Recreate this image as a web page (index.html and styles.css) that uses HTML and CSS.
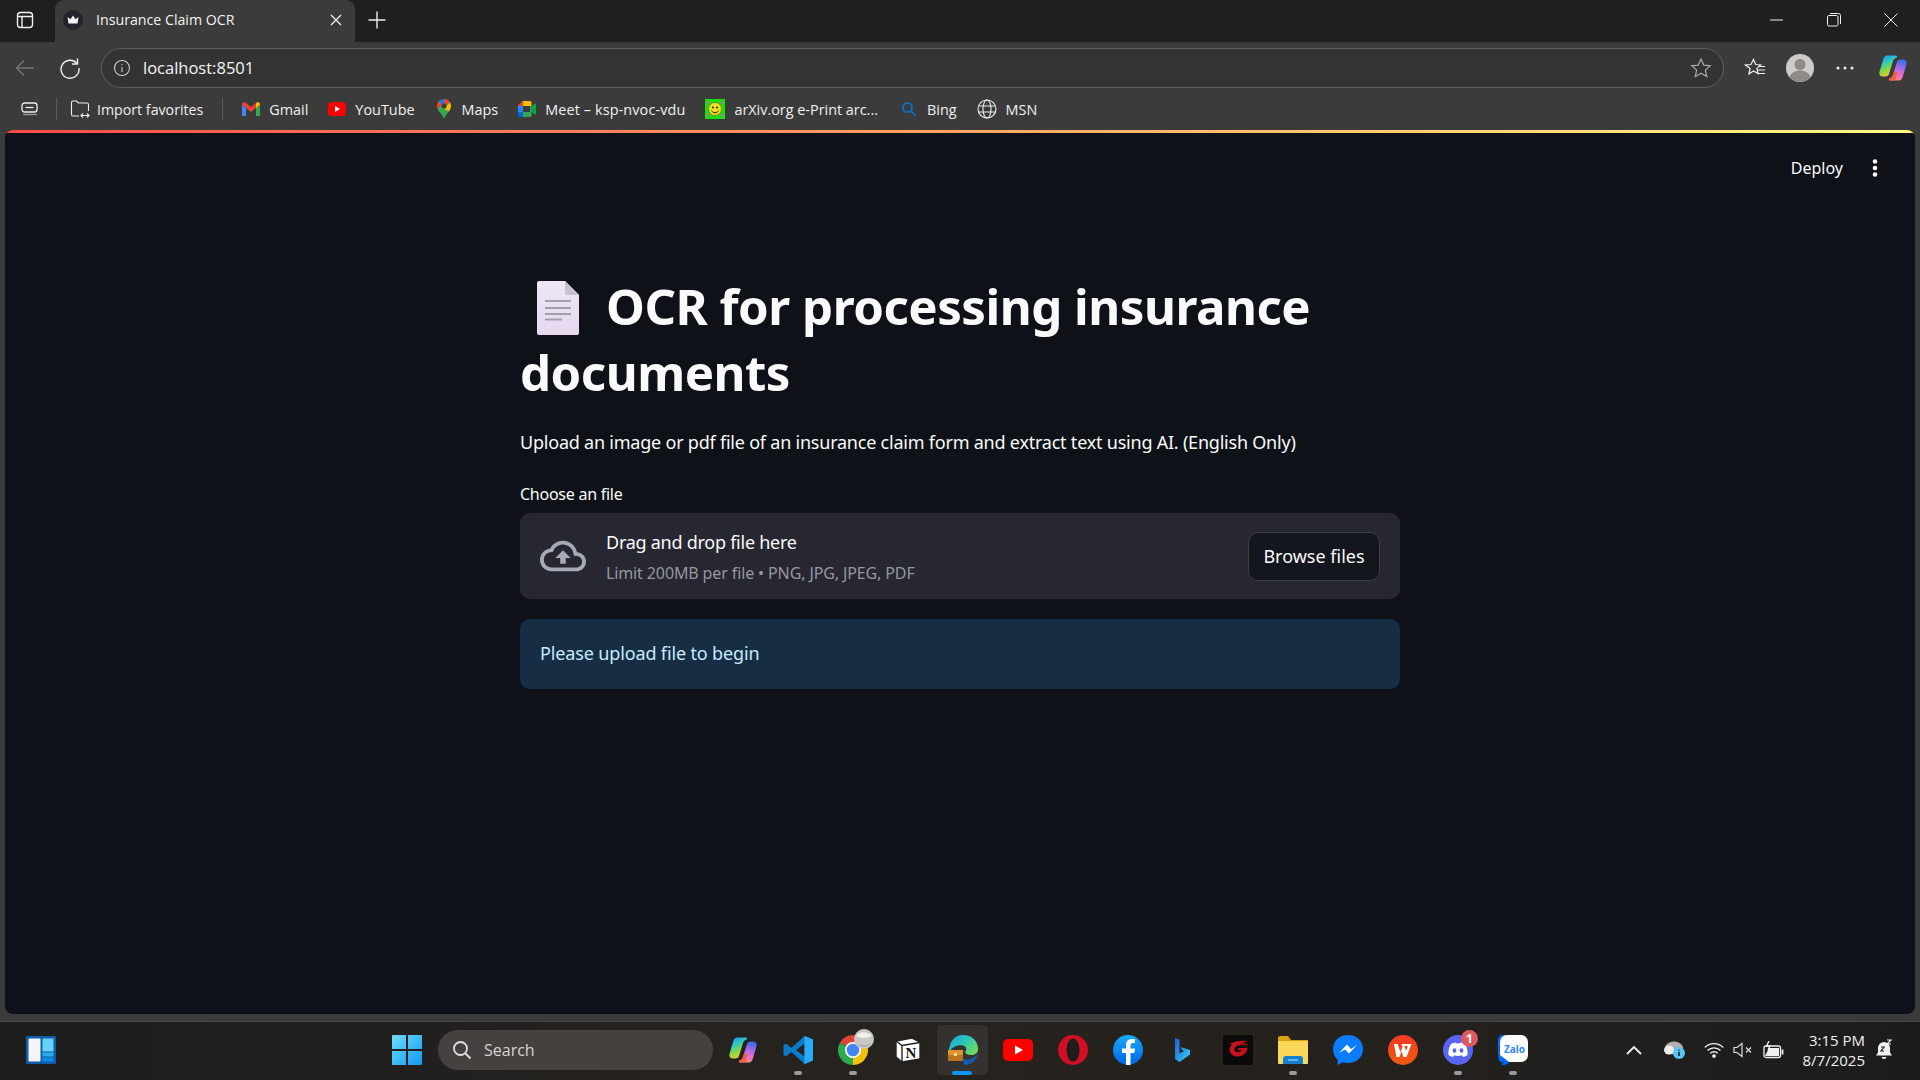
FILE: index.html
```html
<!DOCTYPE html>
<html lang="en">
<head>
<meta charset="utf-8">
<title>Insurance Claim OCR</title>
<link rel="stylesheet" href="styles.css">
</head>
<body>
<div class="screen">
  <div class="titlebar">
    <svg class="side-toggle" width="20" height="20" viewBox="0 0 20 20" fill="none" stroke="#f0f0f0" stroke-width="1.400"><rect x="2.500" y="2.500" width="15" height="15" rx="3"/><path d="M2.500 6.500h15M7 6.500v11"/></svg>
    <div class="tab">
      <svg width="20" height="20" viewBox="0 0 20 20"><circle cx="10" cy="10" r="10" fill="#23242f"/><path d="M4.500 7l3 2.200L10 5.500l2.500 3.700 3-2.200-1 6.500h-9z" fill="#f4f4f4"/></svg>
      <span class="tab-title">Insurance Claim OCR</span>
      <svg class="tab-close" width="14" height="14" viewBox="0 0 14 14" stroke="#eee" stroke-width="1.300"><path d="M2 2l10 10M12 2L2 12"/></svg>
    </div>
    <svg class="new-tab" width="20" height="20" viewBox="0 0 20 20" stroke="#eee" stroke-width="1.400"><path d="M10 1.500v17M1.500 10h17"/></svg>
    <div class="win-controls">
      <svg width="14" height="14" viewBox="0 0 14 14" stroke="#eee" stroke-width="1"><path d="M0 7h13"/></svg>
      <svg width="14" height="14" viewBox="0 0 14 14" fill="none" stroke="#eee" stroke-width="1"><rect x=".5" y="2.500" width="10.500" height="10.500" rx="1.500"/><path d="M3 .5h8.500a2 2 0 0 1 2 2V11"/></svg>
      <svg width="14" height="14" viewBox="0 0 14 14" stroke="#eee" stroke-width="1"><path d="M.5.5l13 13M13.500.5l-13 13"/></svg>
    </div>
  </div>

  <div class="toolbar">
    <svg class="back" width="20" height="20" viewBox="0 0 20 20" fill="none" stroke="#777" stroke-width="1.300"><path d="M19 10H1.500M9 2.500L1.500 10 9 17.500"/></svg>
    <svg class="reload" width="22" height="22" viewBox="0 0 22 22" fill="none" stroke="#eee" stroke-width="1.400"><path d="M18 6.500A9 9 0 1 0 20 11"/><path d="M18.500 1.500v5.500H13"/></svg>
    <div class="address">
      <svg width="18" height="18" viewBox="0 0 18 18" fill="none" stroke="#ccc" stroke-width="1.100"><circle cx="9" cy="9" r="7.500"/><path d="M9 8v5M9 5v1.300"/></svg>
      <span class="url">localhost:8501</span>
      <svg class="star" width="22" height="22" viewBox="0 0 22 22" fill="none" stroke="#aaa" stroke-width="1.200"><path d="M11 2l2.700 6.100 6.500.6-4.900 4.400 1.500 6.500L11 16.200l-5.800 3.400 1.500-6.500-4.900-4.400 6.500-.6z"/></svg>
    </div>
    <svg class="fav" width="22" height="22" viewBox="0 0 22 22" fill="none" stroke="#f0f0f0" stroke-width="1.200"><path d="M9.500 2.500l2.200 5 5 .5-3.800 3.400 1.200 5.100L9.500 14l-4.600 3 1.200-5.600L1.500 8l5.500-.5z"/><path d="M15 9.500h6M14 13h7M14 16.500h7"/></svg>
    <svg class="profile" width="28" height="28" viewBox="0 0 28 28"><circle cx="14" cy="14" r="14" fill="#cdcbc7"/><circle cx="14" cy="10.500" r="5.500" fill="#8e8b87"/><path d="M3.500 23c2-4.500 6-6.500 10.500-6.500S22.500 18.500 24.500 23A14 14 0 0 1 3.500 23z" fill="#8e8b87"/></svg>
    <svg class="dots" width="18" height="4" viewBox="0 0 18 4" fill="#eee"><circle cx="2" cy="2" r="1.500"/><circle cx="9" cy="2" r="1.500"/><circle cx="16" cy="2" r="1.500"/></svg>
    <svg class="copilot" width="28" height="26" viewBox="0 0 28 26"><defs><linearGradient id="cpa" x1="0.100" y1="0" x2="0.500" y2="1"><stop offset="0" stop-color="#1b8ff2"/><stop offset=".35" stop-color="#2bc7c9"/><stop offset=".65" stop-color="#7fd84a"/><stop offset="1" stop-color="#f5c52e"/></linearGradient><linearGradient id="cpb" x1="0.700" y1="0" x2="0.500" y2="1"><stop offset="0" stop-color="#2c6ee8"/><stop offset=".4" stop-color="#a668e8"/><stop offset=".8" stop-color="#ef74c0"/><stop offset="1" stop-color="#f78a7a"/></linearGradient></defs><path d="M8 0.500h8.500c1.500 0 2 1 1.200 2-2 .5-3 1.600-3.700 3.500L10 19c-.6 1.800-2 2.500-3.500 2.500H4C1 21.500-.3 19.200.6 16.500L4 5c.8-2.800 2-4.500 4-4.500z" fill="url(#cpa)"/><path d="M20 25.500h-8.500c-1.500 0-2-1-1.200-2 2-.5 3-1.600 3.700-3.500l4-13c.6-1.800 2-2.500 3.500-2.500H24c3 0 4.300 2.300 3.400 5L24 21c-.8 2.800-2 4.500-4 4.500z" fill="url(#cpb)"/><path d="M10.500 23.800c1.800-.7 2.700-1.800 3.300-3.500l1-3.300h3.500l-1 6c-.5 1.500-2 2.500-3.500 2.500h-2.300c-1.200 0-1.600-.9-1-1.700z" fill="#f2603f"/></svg>
  </div>

  <div class="bookmarks">
    <svg class="bm-tabs" width="18" height="14" viewBox="0 0 18 14" fill="none" stroke="#eee" stroke-width="1.300"><rect x="1" y="1" width="15" height="9" rx="2.500"/><path d="M4.500 5.500h8"/><path d="M2 12.500h14" stroke="#999"/></svg>
    <span class="bm-sep"></span>
    <span class="bm bm-import">
      <svg width="20" height="20" viewBox="0 0 20 20" fill="none" stroke="#eee" stroke-width="1.100"><path d="M9 17H3a1.500 1.500 0 0 1-1.500-1.500V3.500A1.500 1.500 0 0 1 3 2h3.500l2 2H17a1.500 1.500 0 0 1 1.500 1.500V12"/><path d="M11 16.500h8M13 14.500l-2 2 2 2M17 14.500l2 2-2 2"/></svg>
      <span>Import favorites</span>
    </span>
    <span class="bm-sep bm-sep-wide"></span>
    <div class="bm-list">
      <span class="bm"><svg width="18" height="14" viewBox="0 0 18 14"><path d="M0 2.500V14h4V6z" fill="#4285f4"/><path d="M18 2.500V14h-4V6z" fill="#34a853"/><path d="M0 2.500C0 .500 2.500-.5 4 1l5 4 5-4c1.500-1.500 4-.5 4 1.500L14 6 9 10 4 6z" fill="#ea4335"/><path d="M14 1.200c1.500-1.700 4-.7 4 1.300L14 6z" fill="#fbbc04"/></svg><span>Gmail</span></span>
      <span class="bm"><svg width="18" height="14" viewBox="0 0 18 14"><rect width="18" height="14" rx="3.500" fill="#f00"/><path d="M7 4l5 3-5 3z" fill="#fff"/></svg><span>YouTube</span></span>
      <span class="bm"><svg class="bm-pin" width="14" height="20" viewBox="0 0 14 20"><path d="M7 20C5.500 15 0 12 0 7a7 7 0 0 1 14 0c0 5-5.500 8-7 13z" fill="#34a853"/><path d="M2 2.100A7 7 0 0 1 7 0v4.500A2.500 2.500 0 0 0 4.800 6z" fill="#1a73e8"/><path d="M7 0a7 7 0 0 1 6 3.400L9.200 6A2.500 2.500 0 0 0 7 4.500z" fill="#ea4335"/><path d="M13 3.400A7 7 0 0 1 14 7c0 2-1 3.700-2.100 5.200L6 9.500A2.500 2.500 0 0 0 9.500 7z" fill="#fbbc04"/><path d="M2 2.100L4.800 6 1 9.800C.300 8.800 0 8 0 7a7 7 0 0 1 2-4.900z" fill="#ea4335"/><circle cx="7" cy="7" r="2.500" fill="#3c3c3c"/></svg><span>Maps</span></span>
      <span class="bm bm-meet"><svg width="18" height="16" viewBox="0 0 18 16"><path d="M5 0h7v5H0z" fill="#fbbc04"/><path d="M5 0L0 5h5z" fill="#ea4335"/><path d="M0 5h5v6H0z" fill="#2684fc"/><path d="M0 11h5v5H2a2 2 0 0 1-2-2z" fill="#0066da"/><path d="M5 11h7v5H5z" fill="#34a853"/><path d="M12 0a1.500 1.500 0 0 1 1.500 1.500V5H12z" fill="#fbbc04"/><path d="M12 5h1.500v9.500A1.500 1.500 0 0 1 12 16z" fill="#34a853"/><path d="M13.500 5L18 2v12l-4.500-3z" fill="#00ac47"/></svg><span>Meet – ksp-nvoc-vdu</span></span>
      <span class="bm"><svg width="20" height="20" viewBox="0 0 20 20"><rect width="20" height="20" fill="#1adf0a"/><path d="M2 2l4 4M18 2l-4 4M2 18l4-4M18 18l-4-4" stroke="#8a8f80" stroke-width="2"/><circle cx="10" cy="10" r="6.500" fill="#f2e21d" stroke="#6a6a10" stroke-width=".6"/><circle cx="8" cy="8.500" r="1" fill="#222"/><circle cx="12" cy="8.500" r="1" fill="#222"/><path d="M6.500 11.500c1.500 3 5.500 3 7 0" fill="none" stroke="#222"/></svg><span>arXiv.org e-Print arc...</span></span>
      <span class="bm bm-bing"><svg width="18" height="18" viewBox="0 0 18 18" fill="none" stroke="#0f6cbd" stroke-width="2"><circle cx="7.500" cy="7.500" r="4.500"/><path d="M11 11l4.500 4.500"/></svg><span>Bing</span></span>
      <span class="bm"><svg width="20" height="20" viewBox="0 0 20 20" fill="none" stroke="#eee" stroke-width="1.100"><circle cx="10" cy="10" r="9"/><ellipse cx="10" cy="10" rx="4" ry="9"/><path d="M1.800 7h16.400M1.800 13h16.400"/></svg><span>MSN</span></span>
    </div>
  </div>

  <main class="panel">
    <div class="decoration"></div>
    <header class="app-header">
      <span class="deploy">Deploy</span>
      <svg class="kebab" width="6" height="18" viewBox="0 0 6 18" fill="#fafafa"><circle cx="3" cy="2.500" r="2.300"/><circle cx="3" cy="9" r="2.300"/><circle cx="3" cy="15.500" r="2.300"/></svg>
    </header>
    <section class="content">
      <h1 class="title"><svg class="doc-emoji" width="42" height="54" viewBox="0 0 42 54"><defs><linearGradient id="doc" x1="0" y1="0" x2="0" y2="1"><stop offset="0" stop-color="#efe6f7"/><stop offset="1" stop-color="#e4d9ef"/></linearGradient></defs><path d="M2 0h26l14 14v38a2 2 0 0 1-2 2H2a2 2 0 0 1-2-2V2a2 2 0 0 1 2-2z" fill="url(#doc)"/><path d="M28 0l14 14H30a2 2 0 0 1-2-2z" fill="#c9c3cf"/><path d="M8 20h26M8 27h26M8 33h26M8 38.500h17" stroke="#a69eae" stroke-width="1.800"/></svg>OCR for processing insurance documents</h1>
      <p class="intro">Upload an image or pdf file of an insurance claim form and extract text using AI. (English Only)</p>
      <label class="field-label">Choose an file</label>
      <div class="dropzone">
        <svg class="cloud" width="46" height="46" viewBox="0 0 24 24" fill="#a6a9b6"><path d="M19.350 10.040C18.670 6.590 15.640 4 12 4 9.110 4 6.600 5.640 5.350 8.040 2.340 8.360 0 10.910 0 14c0 3.310 2.690 6 6 6h13c2.760 0 5-2.240 5-5 0-2.640-2.050-4.780-4.650-4.960zM19 18H6c-2.210 0-4-1.790-4-4 0-2.050 1.530-3.760 3.560-3.970l1.070-.11.5-.95C8.080 7.140 9.940 6 12 6c2.620 0 4.880 1.860 5.390 4.430l.3 1.500 1.530.11c1.560.1 2.780 1.410 2.780 2.960 0 1.650-1.350 3-3 3zM8 13h2.550v3h2.900v-3H16l-4-4z"/></svg>
        <div class="drop-text">
          <span class="drop-main">Drag and drop file here</span>
          <span class="drop-sub">Limit 200MB per file • PNG, JPG, JPEG, PDF</span>
        </div>
        <button class="browse">Browse files</button>
      </div>
      <div class="alert">Please upload file to begin</div>
    </section>
  </main>

  <footer class="taskbar">
    <svg class="widgets" width="30" height="28" viewBox="0 0 30 28"><rect width="30" height="28" rx="1.500" fill="#0f5da8"/><rect x="2.500" y="2.500" width="12" height="23" rx="1" fill="#f4f4f6"/><rect x="16.500" y="2.500" width="11" height="13" fill="#66d2fb"/><rect x="16.500" y="16.500" width="11" height="4" fill="#2eabf0"/><rect x="16.500" y="21.500" width="11" height="4" fill="#0b8bea"/></svg>
    <svg class="start" width="30" height="30" viewBox="0 0 30 30"><defs><linearGradient id="win" x1="0" y1="0" x2="1" y2="1"><stop offset="0" stop-color="#6fdcff"/><stop offset="1" stop-color="#0f9bf0"/></linearGradient></defs><path d="M0 1a1 1 0 0 1 1-1h13v14H0zM16 0h13a1 1 0 0 1 1 1v13H16zM0 16h14v14H1a1 1 0 0 1-1-1zM16 16h14v13a1 1 0 0 1-1 1H16z" fill="url(#win)"/></svg>
    <div class="search">
      <svg width="20" height="20" viewBox="0 0 20 20" fill="none" stroke="#e0e0e0" stroke-width="1.800"><circle cx="8.500" cy="8.500" r="6.500"/><path d="M13.500 13.500l5 5"/></svg>
      <span>Search</span>
    </div>
    <div class="apps">
      <span class="app"><svg width="28" height="26" viewBox="0 0 28 26"><path d="M8 0.500h8.500c1.500 0 2 1 1.200 2-2 .5-3 1.600-3.700 3.500L10 19c-.6 1.800-2 2.500-3.500 2.500H4C1 21.500-.3 19.200.6 16.500L4 5c.8-2.800 2-4.500 4-4.500z" fill="url(#cpa)"/><path d="M20 25.500h-8.500c-1.500 0-2-1-1.200-2 2-.5 3-1.600 3.700-3.500l4-13c.6-1.800 2-2.500 3.500-2.500H24c3 0 4.300 2.300 3.400 5L24 21c-.8 2.800-2 4.500-4 4.500z" fill="url(#cpb)"/><path d="M10.500 23.800c1.800-.7 2.700-1.800 3.300-3.500l1-3.300h3.500l-1 6c-.5 1.500-2 2.500-3.500 2.500h-2.300c-1.200 0-1.600-.9-1-1.700z" fill="#f2603f"/></svg></span>
      <span class="app app-open"><svg width="30" height="30" viewBox="0 0 30 30"><path d="M21.500 1L8.500 13 3 8.800 0.500 10v10L3 21.200 8.500 17l13 12L30 25.500v-21zM21.500 8.500v13L13 15z" fill="#0a7cd0"/><path d="M21.500 1L30 4.500v21L21.500 29z" fill="#2aa9f5"/></svg></span>
      <span class="app app-open"><svg class="chrome" width="30" height="30" viewBox="0 0 30 30"><path d="M15 15L2 7.500A15 15 0 0 1 28 7.500z" fill="#db4437"/><path d="M15 15L28 7.500A15 15 0 0 1 15 30z" fill="#f4c20d"/><path d="M15 15L15 30A15 15 0 0 1 2 7.500z" fill="#2da94f"/><circle cx="15" cy="15" r="8" fill="#fff"/><circle cx="15" cy="15" r="6.300" fill="#4285f4"/><circle cx="26" cy="4" r="10" fill="#c7c8c6"/><path d="M18 1c4-5 11-5 16 0-4 2-11 3-16 0z" fill="#f0efe8"/><path d="M19 8c4 3 10 3 14 0-3 5-11 5-14 0z" fill="#a9a7a0"/></svg></span>
      <span class="app"><svg width="26" height="26" viewBox="0 0 26 26"><path d="M1 4l16-3 8 4v17l-18 3-6-5z" fill="#fff" stroke="#222" stroke-width="1.400"/><path d="M1 4l6 4.500 18-3M7 8.500V25" fill="none" stroke="#222" stroke-width="1.400"/><text x="16" y="21" class="notion-n">N</text></svg></span>
      <span class="app app-active"><svg width="30" height="30" viewBox="0 0 30 30"><defs><linearGradient id="edge" x1="0" y1="0" x2="1" y2="0.700"><stop offset="0" stop-color="#1a9fe0"/><stop offset=".55" stop-color="#2fc7b8"/><stop offset="1" stop-color="#6fdc5a"/></linearGradient></defs><path d="M15 0c9 0 15 6 15 14 0 4-3 6-7 6-4 0-6-1.500-6-3.500 2-1 2-5-2-6-5-1-11 1-14 7C1 7 6 0 15 0z" fill="url(#edge)"/><path d="M15 24c5 2 11 0 15-6-1 7-7 12-14 12z" fill="#0f5fb4"/><rect x="0" y="15" width="15" height="11" rx="1" fill="#b97420"/><rect x="0" y="15" width="15" height="5" fill="#e0962c"/><rect x="6" y="18" width="3" height="3" fill="#f6d58a"/></svg></span>
      <span class="app"><svg width="30" height="22" viewBox="0 0 30 22"><rect width="30" height="22" rx="5" fill="#f00"/><path d="M12 6.500l8 4.500-8 4.500z" fill="#fff"/></svg></span>
      <span class="app"><svg width="30" height="30" viewBox="0 0 30 30"><circle cx="15" cy="15" r="15" fill="#d10f23"/><ellipse cx="15" cy="15" rx="6.500" ry="11.500" fill="#1f1c1a"/></svg></span>
      <span class="app"><svg width="30" height="30" viewBox="0 0 30 30"><defs><linearGradient id="fb" x1="0" y1="0" x2="0" y2="1"><stop offset="0" stop-color="#18acfe"/><stop offset="1" stop-color="#0165e1"/></linearGradient></defs><circle cx="15" cy="15" r="15" fill="url(#fb)"/><path d="M13 30V18H9v-4.500h4V10c0-4 2.500-6 6-6l3 .2V8h-2c-2 0-2.500 1-2.500 2.500v3H22l-.7 4.500h-3.800v12z" fill="#fff"/></svg></span>
      <span class="app"><svg width="16" height="24" viewBox="0 0 16 24"><defs><linearGradient id="bg" x1="0" y1="0" x2="1" y2="1"><stop offset="0" stop-color="#1b5fd6"/><stop offset=".6" stop-color="#2aa1e8"/><stop offset="1" stop-color="#46d6e8"/></linearGradient></defs><path d="M0 0l4.500 1.500v14L9 13l-2-1-1.500-3L15 12v4.500L4.500 24 0 21z" fill="url(#bg)"/></svg></span>
      <span class="app"><svg width="30" height="30" viewBox="0 0 30 30"><rect width="30" height="30" rx="2" fill="#0a0a0a"/><path d="M6 9c6-3 13-4 19-3-3 .5-5 1.500-6 2.500 3-.5 5 .5 6 2-4-1-9-1-12 1-2.500 2-2 5 1 5.500 2 .3 4-.5 5-2h-5l2-2h8.500c-.5 5-5 9-11 8.500-5-.5-8-4.500-6.500-9 .5-1.500 1.500-2.500 2.500-3.500z" fill="#c6101c"/></svg></span>
      <span class="app app-open"><svg width="30" height="28" viewBox="0 0 30 28"><path d="M0 2a2 2 0 0 1 2-2h8l3 4h17v5H0z" fill="#d9a30e"/><path d="M0 5h30v22a1 1 0 0 1-1 1H1a1 1 0 0 1-1-1z" fill="#fbd85a"/><path d="M5 28v-5a3 3 0 0 1 3-3h14a3 3 0 0 1 3 3v5z" fill="#1280cf"/><path d="M10 24h10" stroke="#7bc4ee" stroke-width="1.500"/></svg></span>
      <span class="app"><svg width="30" height="30" viewBox="0 0 30 30"><path d="M15 0C6.500 0 0 6 0 14.200c0 4.300 1.800 8 4.700 10.500V30l5-2.700c1.600.4 3.400.7 5.300.7 8.500 0 15-6 15-14C30 6 23.500 0 15 0z" fill="#0a7cff"/><path d="M6 18l8-8.500 4 4.500 6-4-8 8.500-4-4z" fill="#fff"/></svg></span>
      <span class="app"><svg width="30" height="30" viewBox="0 0 30 30"><defs><linearGradient id="wps" x1="0" y1="0" x2="0" y2="1"><stop offset="0" stop-color="#f33a22"/><stop offset="1" stop-color="#ec5a10"/></linearGradient></defs><circle cx="15" cy="15" r="15" fill="url(#wps)"/><path d="M6 9h3.500l3 8 2-5-1-3h10l-5 13h-3l-2-6-2 6h-3zM16.500 11l1.500 5 1.800-5z" fill="#fff" fill-rule="evenodd"/></svg></span>
      <span class="app app-open app-discord"><svg width="30" height="30" viewBox="0 0 30 30"><circle cx="15" cy="15" r="15" fill="#5865f2"/><path d="M8 9c2-1 4-1.500 4.500-1.500l.5 1c1.500-.2 2.500-.2 4 0l.5-1c.5 0 2.500.5 4.500 1.500 2 3 3 7 2.500 11-1.500 1.200-3.500 2-4.500 2l-1-1.700c-3 1-5 1-8 0L10 22c-1 0-3-.8-4.500-2C5 16 6 12 8 9z" fill="#fff"/><ellipse cx="11.500" cy="15.500" rx="1.900" ry="2.200" fill="#5865f2"/><ellipse cx="18.500" cy="15.500" rx="1.900" ry="2.200" fill="#5865f2"/></svg><span class="badge">1</span></span>
      <span class="app app-open"><svg width="30" height="30" viewBox="0 0 30 30"><path d="M4 0h4C3 3 1 9 2 18c.4 4 1 6 3 8l-1 4c3 0 5-1 7-2-4 0-9 0-10-3C0 22 0 8 0 6c0-3 2-6 4-6z" fill="#0068ff"/><rect x="2" y="0" width="28" height="27" rx="7" fill="#fff"/><path d="M2 20c0 4 2 7 4 7l-2 3c3 0 5-1 7-3z" fill="#0068ff"/><text x="16.500" y="17.500" class="zalo">Zalo</text></svg></span>
    </div>
    <div class="tray">
      <svg class="tr-chev" width="16" height="10" viewBox="0 0 16 10" fill="none" stroke="#f0f0f0" stroke-width="1.800"><path d="M1 9l7-7 7 7"/></svg>
      <svg class="tr-cloud" width="22" height="20" viewBox="0 0 22 20"><ellipse cx="10" cy="8" rx="9" ry="6.500" fill="#b0b0b0"/><ellipse cx="5" cy="10" rx="5" ry="4.500" fill="#ededed"/><circle cx="15" cy="13" r="6" fill="#5cc4f5"/><path d="M15 12v4M15 9.700v1" stroke="#1d1d1d" stroke-width="1.600"/></svg>
      <svg class="tr-wifi" width="20" height="16" viewBox="0 0 20 16" fill="none" stroke="#f0f0f0" stroke-width="1.300"><path d="M.8 5.500a13 13 0 0 1 18.400 0M3.500 8.500a9.200 9.200 0 0 1 13 0M6.300 11.300a5.200 5.200 0 0 1 7.400 0"/><circle cx="10" cy="14" r="1.200" fill="#f0f0f0"/></svg>
      <svg class="tr-vol" width="20" height="16" viewBox="0 0 20 16" fill="none" stroke="#e0e0e0" stroke-width="1.200"><path d="M1 5.500h3L9 1.500v13L4 10.500H1z"/><path d="M13 5.500l5 5M18 5.500l-5 5"/></svg>
      <svg class="tr-bat" width="21" height="18" viewBox="0 0 21 18" fill="none" stroke="#f0f0f0" stroke-width="1.300"><rect x="1" y="5" width="16.500" height="11.500" rx="2"/><path d="M19.500 8.500v5" stroke-width="1.800"/><path d="M2 15l4-8h10v8z" fill="#f0f0f0" stroke="none"/><path d="M6 0L3.500 5H7L5 9" stroke-width="1.300"/></svg>
      <div class="clock"><span>3:15 PM</span><span>8/7/2025</span></div>
      <svg class="tr-bell" width="18" height="22" viewBox="0 0 18 22"><path d="M9 3a6 6 0 0 0-6 6v4.500L1 16.500h16L15 13.500V9a6 6 0 0 0-6-6z" fill="#f0f0f0"/><path d="M6.500 18a2.600 2.600 0 0 0 5 0z" fill="#f0f0f0"/><path d="M6 8h3l-3 4h3" fill="none" stroke="#1d1d1d" stroke-width="1.200"/><path d="M12 1h4l-4 4h4" fill="none" stroke="#f0f0f0" stroke-width="1.200"/></svg>
    </div>
  </footer>
</div>
</body>
</html>
```

FILE: styles.css
```css
* { box-sizing: border-box; }
html, body { margin: 0; padding: 0; height: 100%; }
body { background: #3b3b3b; font-family: "Noto Sans", "Open Sans", sans-serif; color: #fafafa; overflow: hidden; }
svg { flex: none; display: block; }

.screen { width: 1920px; height: 1080px; display: flex; flex-direction: column; }

/* window title row */
.titlebar { height: 42px; background: #1f1f1f; display: flex; align-items: center; padding: 0 0 2px 15px; }
.tab { width: 300px; height: 42px; align-self: flex-start; margin-left: 20px; padding: 0 12px 3px 8px; background: #3b3b3b; border-radius: 9px 9px 0 0; display: flex; align-items: center; gap: 13px; }
.tab-title { font-family: "Open Sans", sans-serif; font-size: 14.200px; color: #f2f2f2; flex: 1; white-space: nowrap; }
.new-tab { margin-left: 12px; }
.win-controls { margin-left: auto; display: flex; gap: 43px; padding-right: 22px; }

/* address row */
.toolbar { height: 46px; display: flex; align-items: center; padding: 5px 0 0 15px; }
.reload { margin-left: 24px; }
.address { width: 1623px; height: 40px; margin-left: 20px; border: 1.500px solid #5f5f5f; border-radius: 20px; background: #333; display: flex; align-items: center; padding: 0 11px 0 11px; }
.url { font-family: "Open Sans", sans-serif; font-size: 16.500px; color: #f5f5f5; margin-left: 12px; flex: 1; }
.fav { margin-left: 20px; }
.profile { margin-left: 20px; }
.dots { margin-left: 22px; }
.copilot { margin-left: 25px; }

/* favourites row */
.bookmarks { height: 42px; display: flex; align-items: center; padding-left: 21px; }
.bm-sep { width: 1px; height: 22px; background: #5a5a5a; margin-left: 17px; }
.bm-sep-wide { margin-left: 19px; }
.bm { display: flex; align-items: center; gap: 9px; font-family: "Open Sans", sans-serif; font-size: 14.400px; color: #f0f0f0; white-space: nowrap; }
.bm-import { margin-left: 13px; gap: 7px; font-size: 14.200px; }
.bm-list { display: flex; align-items: center; gap: 20px; margin-left: 19px; }
.bm-pin { margin: 0 2px; }
.bm-meet { letter-spacing: 0.130px; }
.bm-bing { margin-left: 2px; }

/* Streamlit panel */
.panel { height: 884px; margin: 0 5px; background: #0e1117; border-radius: 8px; overflow: hidden; display: flex; flex-direction: column; }
.decoration { height: 3px; flex: none; background: linear-gradient(90deg, #ff4b4b, #fffd80); }
.app-header { height: 70px; flex: none; display: flex; align-items: center; justify-content: flex-end; gap: 29px; padding-right: 37px; }
.deploy { font-size: 16px; color: #fafafa; }
.content { width: 880px; margin: 70px auto 0; display: flex; flex-direction: column; }
.title { margin: 0; font-size: 49.200px; line-height: 66px; font-weight: 700; letter-spacing: -0.500px; color: #fafafa; }
.doc-emoji { display: inline-block; vertical-align: -10px; margin: 0 27px 0 17px; }
.intro { margin: 22px 0 0; font-size: 18px; line-height: 30px; letter-spacing: -0.220px; color: #fafafa; }
.field-label { margin-top: 26px; font-size: 16px; line-height: 22px; letter-spacing: -0.250px; color: #fafafa; }
.dropzone { margin-top: 8px; height: 86px; background: #262730; border-radius: 10px; display: flex; align-items: center; padding: 0 20px; }
.drop-text { display: flex; flex-direction: column; margin-left: 20px; padding-top: 2px; gap: 8px; flex: 1; }
.drop-main { font-size: 18px; line-height: 24px; letter-spacing: -0.260px; color: #fafafa; }
.drop-sub { font-size: 16px; line-height: 22px; letter-spacing: -0.120px; color: #96979e; }
.browse { width: 132px; height: 49px; background: #13161d; border: 1px solid #3c3e47; border-radius: 10px; color: #fafafa; font: 18px "Noto Sans", sans-serif; padding: 0; }
.alert { margin-top: 20px; height: 70px; background: #172d43; border-radius: 10px; display: flex; align-items: center; padding: 0 20px 2px; font-size: 18px; letter-spacing: -0.140px; color: #c7ebff; }

/* taskbar */
.taskbar { margin-top: 7px; height: 59px; flex: none; display: flex; align-items: center; padding: 0 0 2px 26px; background: linear-gradient(90deg, #1d1d1d 0%, #26231f 40%, #25221e 70%, #1c1c1c 100%); border-top: 1px solid #454545; }
.start { margin-left: 336px; }
.search { margin-left: 16px; width: 275px; height: 40px; border-radius: 20px; background: #44413f; display: flex; align-items: center; gap: 12px; padding-left: 14px; font-family: "Open Sans", sans-serif; font-size: 16px; color: #d6d4d2; }
.apps { display: flex; margin-left: 2px; }
.app { position: relative; width: 55px; height: 50px; display: flex; align-items: center; justify-content: center; }
.chrome { overflow: visible; }
.app-open::after { content: ""; position: absolute; left: 24px; bottom: 0; width: 8px; height: 4px; border-radius: 2px; background: #9a9a9a; }
.app-active { background: #34312e; border-radius: 5px; margin: 0 2px; width: 51px; }
.app-active::after { content: ""; position: absolute; left: 15px; bottom: 0; width: 20px; height: 4px; border-radius: 2px; background: #0a94f5; }
.app-discord .badge { position: absolute; top: 5px; right: 7px; width: 17px; height: 17px; border-radius: 50%; background: #dc5a5f; color: #fff; font-size: 12px; font-weight: 700; display: flex; align-items: center; justify-content: center; }
.notion-n { font: 700 15px "Liberation Serif", serif; text-anchor: middle; fill: #111; }
.zalo { font: 700 10px "Noto Sans", sans-serif; text-anchor: middle; fill: #2f86f2; }
.tray { display: flex; align-items: center; margin-left: 86px; }
.tr-cloud { margin-left: 22px; }
.tr-wifi { margin-left: 18px; }
.tr-vol { margin-left: 9px; }
.tr-bat { margin-left: 10px; }
.clock { margin-left: 3px; width: 78px; display: flex; flex-direction: column; align-items: flex-end; font-family: "Open Sans", sans-serif; font-size: 15px; line-height: 20px; color: #f0f0f0; }
.tr-bell { margin-left: 10px; }
```
